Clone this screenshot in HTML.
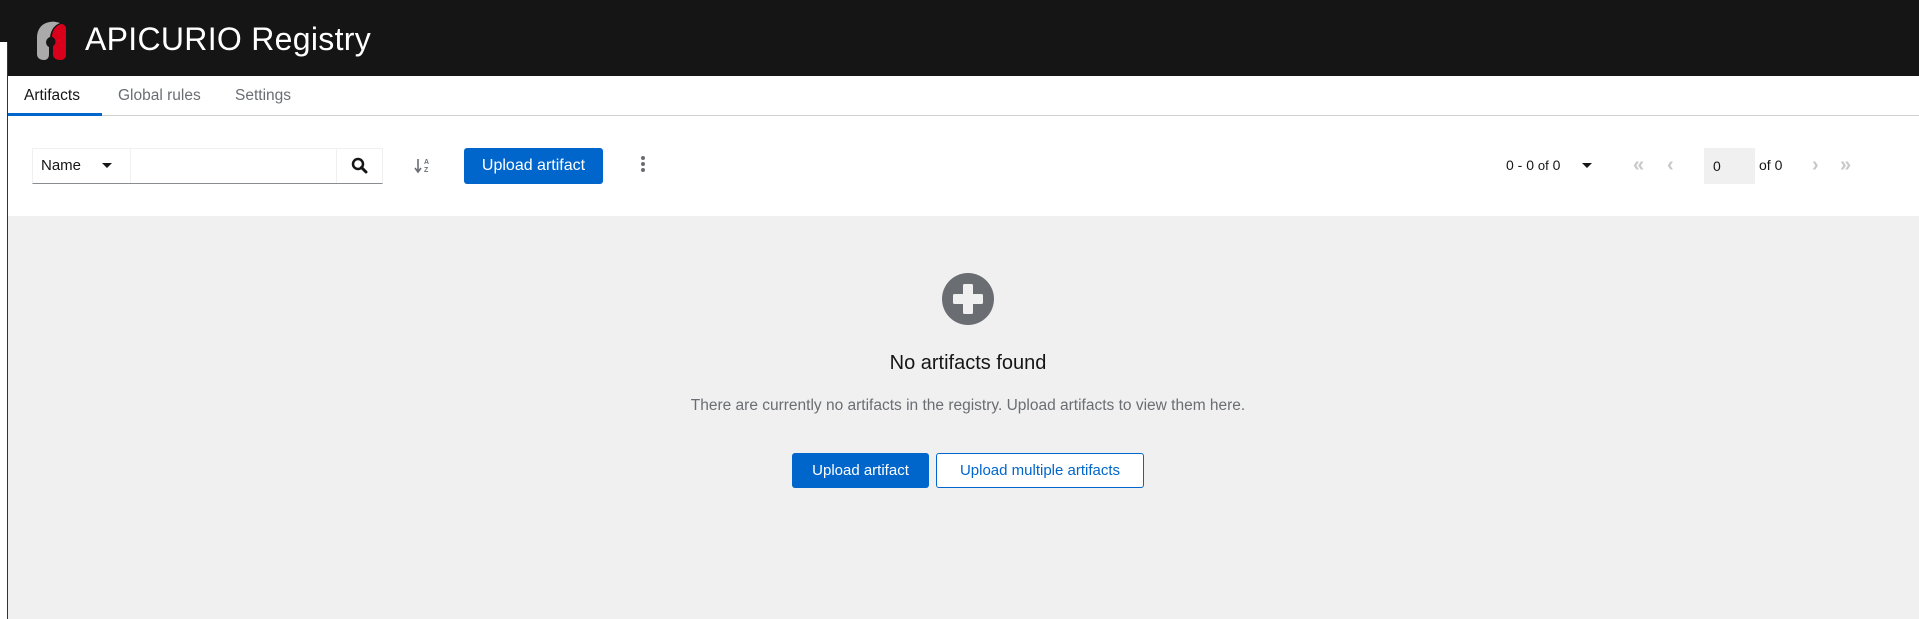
<!DOCTYPE html>
<html><head><meta charset="utf-8"><style>
*{box-sizing:border-box;margin:0;padding:0}
body{width:1919px;height:619px;overflow:hidden;background:#fff;font-family:"Liberation Sans",sans-serif;position:relative;color:#151515}
.a{position:absolute}
</style></head><body>
<div class="a" style="left:0;top:0;width:1919px;height:76px;background:#151515"></div>
<div class="a" style="left:0;top:42px;width:7px;height:577px;background:#fff"></div>
<div class="a" style="left:7px;top:42px;width:1px;height:577px;background:#333"></div>
<svg class="a" style="left:36px;top:21px" width="40" height="40" viewBox="0 0 40 40">
<path d="M14 1 C6 2 1 8 1 17 L1 33 C1 37 4 39 8 39 C12 39 13 36 13 33 L13 26 C9 24 9 18 14 16 C15 8 19 4 24 2 C21 1 17 0 14 1Z" fill="#aaa"/>
<path d="M25 3 C19 5 16 10 16 16 C20 17 21 23 17 25 L17 33 C17 37 20 39 24 39 C28 39 30 37 30 33 L30 8 C30 5 28 3 25 3Z" fill="#d9001b"/>
</svg>
<div class="a" style="left:85px;top:19px;font-size:32px;color:#fff;line-height:40px;letter-spacing:0.3px">APICURIO Registry</div>
<div class="a" style="left:8px;top:115px;width:1911px;height:1px;background:#d2d2d2"></div>
<div class="a" style="left:8px;top:113px;width:94px;height:3px;background:#06c"></div>
<div class="a" style="left:24px;top:87px;font-size:15.5px;color:#151515">Artifacts</div>
<div class="a" style="left:118px;top:87px;font-size:15.5px;color:#6a6e73">Global rules</div>
<div class="a" style="left:235px;top:87px;font-size:15.5px;color:#6a6e73">Settings</div>

<div class="a" style="left:32px;top:148px;width:351px;height:36px;border:1px solid #f0f0f0;border-bottom:1px solid #8a8d90"></div>
<div class="a" style="left:130px;top:148px;width:1px;height:35px;background:#f0f0f0"></div>
<div class="a" style="left:336px;top:148px;width:1px;height:35px;background:#f0f0f0"></div>
<div class="a" style="left:41px;top:157px;font-size:15px">Name</div>
<div class="a" style="left:102px;top:163px;width:0;height:0;border-left:5px solid transparent;border-right:5px solid transparent;border-top:5px solid #151515"></div>
<svg class="a" style="left:351px;top:157px" width="17" height="17" viewBox="0 0 17 17"><circle cx="7" cy="7" r="5" fill="none" stroke="#151515" stroke-width="2.5"/><path d="M10.5 10.5 L15 15" stroke="#151515" stroke-width="3" stroke-linecap="round"/></svg>
<svg class="a" style="left:414px;top:156px" width="18" height="20" viewBox="0 0 18 20"><path d="M4 3 V15 M1 12 L4 16 L7 12" fill="none" stroke="#6a6e73" stroke-width="1.6"/><text x="10" y="8" font-size="7" font-family="Liberation Sans" fill="#6a6e73" font-weight="bold">A</text><text x="10" y="16" font-size="7" font-family="Liberation Sans" fill="#6a6e73" font-weight="bold">Z</text></svg>
<div class="a" style="left:464px;top:148px;width:139px;height:36px;background:#06c;border-radius:3px;color:#fff;font-size:16px;text-align:center;line-height:36px">Upload artifact</div>
<div class="a" style="left:641px;top:156px;width:4px;height:4px;border-radius:2px;background:#6a6e73;box-shadow:0 6px 0 #6a6e73,0 12px 0 #6a6e73"></div>

<div class="a" style="left:1506px;top:157px;font-size:14px"><span>0 - 0</span> <span style="font-size:13px">of</span> 0</div>
<div class="a" style="left:1582px;top:163px;width:0;height:0;border-left:5px solid transparent;border-right:5px solid transparent;border-top:5px solid #151515"></div>
<div class="a" style="left:1633px;top:155px;font-size:20px;color:#c8c8c8;font-weight:bold;line-height:20px">«</div>
<div class="a" style="left:1667px;top:155px;font-size:20px;color:#c8c8c8;font-weight:bold;line-height:20px">‹</div>
<div class="a" style="left:1704px;top:148px;width:51px;height:36px;background:#f0f0f0;font-size:14px;line-height:36px;padding-left:9px">0</div>
<div class="a" style="left:1759px;top:157px;font-size:14px">of 0</div>
<div class="a" style="left:1812px;top:155px;font-size:20px;color:#c8c8c8;font-weight:bold;line-height:20px">›</div>
<div class="a" style="left:1840px;top:155px;font-size:20px;color:#c8c8c8;font-weight:bold;line-height:20px">»</div>

<div class="a" style="left:8px;top:216px;width:1911px;height:403px;background:#f0f0f0"></div>
<svg class="a" style="left:942px;top:273px" width="52" height="52" viewBox="0 0 52 52"><circle cx="26" cy="26" r="26" fill="#6a6e73"/><rect x="21" y="11" width="10" height="30" rx="1.5" fill="#f0f0f0"/><rect x="11" y="21" width="30" height="10" rx="1.5" fill="#f0f0f0"/></svg>
<div class="a" style="left:0;width:1936px;top:352px;text-align:center;font-size:20px">No artifacts found</div>
<div class="a" style="left:0;width:1936px;top:397px;text-align:center;font-size:15.5px;color:#6a6e73">There are currently no artifacts in the registry. Upload artifacts to view them here.</div>
<div class="a" style="left:792px;top:453px;width:137px;height:35px;background:#06c;border-radius:3px;color:#fff;font-size:15px;text-align:center;line-height:35px">Upload artifact</div>
<div class="a" style="left:936px;top:453px;width:208px;height:35px;border:1px solid #06c;background:#fff;border-radius:3px;color:#06c;font-size:15px;text-align:center;line-height:33px">Upload multiple artifacts</div>
</body></html>
